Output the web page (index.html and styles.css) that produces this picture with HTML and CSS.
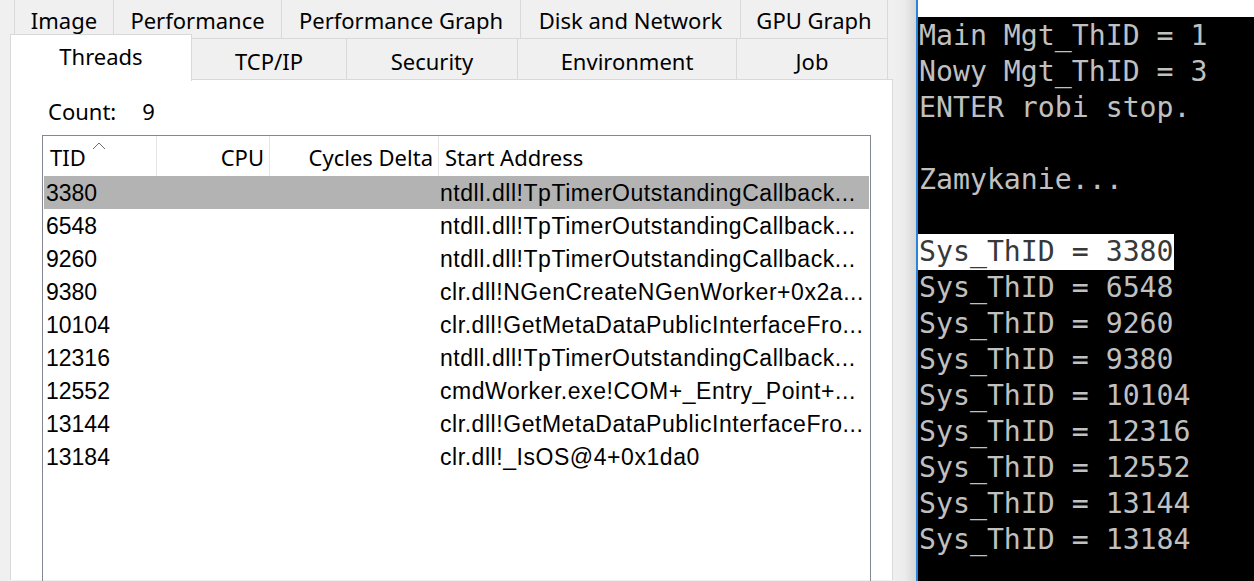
FILE: index.html
```html
<!DOCTYPE html>
<html>
<head>
<meta charset="utf-8">
<link rel="stylesheet" href="styles.css">
</head>
<body>
<div class="screen">
  <div class="dialog">
    <div class="tabrow row1">
      <div class="tab" style="width:100px">Image</div>
      <div class="tab" style="width:168px">Performance</div>
      <div class="tab" style="width:239px">Performance Graph</div>
      <div class="tab" style="width:220px">Disk and Network</div>
      <div class="tab" style="width:147px">GPU Graph</div>
    </div>
    <div class="tabrow row2">
      <div class="tab selected" style="width:182px">Threads</div>
      <div class="tab" style="width:155px">TCP/IP</div>
      <div class="tab" style="width:171px">Security</div>
      <div class="tab" style="width:219px">Environment</div>
      <div class="tab" style="width:151px">Job</div>
      <div class="tab filler"></div>
    </div>
    <div class="panel">
      <div class="count"><span class="count-label">Count:</span><span class="count-val">9</span></div>
      <div class="list">
        <div class="lhead">
          <div class="hc c-tid">TID<span class="sort">
            <svg width="14" height="8" viewBox="0 0 14 8"><polyline points="1,7 7,1 13,7" fill="none" stroke="#6d6d6d" stroke-width="1"/></svg></span></div>
          <div class="hc c-cpu">CPU</div>
          <div class="hc c-cyc">Cycles Delta</div>
          <div class="hc c-addr">Start Address</div>
        </div>
        <div class="lrow sel"><span class="r-tid">3380</span><span class="r-addr">ntdll.dll!TpTimerOutstandingCallback...</span></div>
        <div class="lrow"><span class="r-tid">6548</span><span class="r-addr">ntdll.dll!TpTimerOutstandingCallback...</span></div>
        <div class="lrow"><span class="r-tid">9260</span><span class="r-addr">ntdll.dll!TpTimerOutstandingCallback...</span></div>
        <div class="lrow"><span class="r-tid">9380</span><span class="r-addr">clr.dll!NGenCreateNGenWorker+0x2a...</span></div>
        <div class="lrow"><span class="r-tid">10104</span><span class="r-addr">clr.dll!GetMetaDataPublicInterfaceFro...</span></div>
        <div class="lrow"><span class="r-tid">12316</span><span class="r-addr">ntdll.dll!TpTimerOutstandingCallback...</span></div>
        <div class="lrow"><span class="r-tid">12552</span><span class="r-addr">cmdWorker.exe!COM+_Entry_Point+...</span></div>
        <div class="lrow"><span class="r-tid">13144</span><span class="r-addr">clr.dll!GetMetaDataPublicInterfaceFro...</span></div>
        <div class="lrow"><span class="r-tid">13184</span><span class="r-addr">clr.dll!_IsOS@4+0x1da0</span></div>
      </div>
    </div>
  </div>
  <div class="shadow"></div>
  <div class="console">
    <div class="titlebar"></div>
    <div class="term">
      <div class="line">Main Mgt_ThID = 1</div>
      <div class="line">Nowy Mgt_ThID = 3</div>
      <div class="line">ENTER robi stop.</div>
      <div class="line"></div>
      <div class="line">Zamykanie...</div>
      <div class="line"></div>
      <div class="line"><span class="hl">Sys_ThID = 3380</span></div>
      <div class="line">Sys_ThID = 6548</div>
      <div class="line">Sys_ThID = 9260</div>
      <div class="line">Sys_ThID = 9380</div>
      <div class="line">Sys_ThID = 10104</div>
      <div class="line">Sys_ThID = 12316</div>
      <div class="line">Sys_ThID = 12552</div>
      <div class="line">Sys_ThID = 13144</div>
      <div class="line">Sys_ThID = 13184</div>
    </div>
  </div>
</div>
</body>
</html>
```

FILE: styles.css
```css
* { box-sizing: border-box; }
html, body { margin: 0; padding: 0; }
body { width: 1254px; height: 581px; overflow: hidden; background: #f0f0f0; }
.screen { display: flex; width: 1254px; height: 581px; overflow: hidden; }

.dialog {
  width: 893px; flex: none;
  background: #f0f0f0;
  font-family: "Noto Sans", sans-serif;
  font-size: 22px;
  color: #000;
}
.tabrow { display: flex; }
.row1 { height: 39px; padding-left: 14px; }
.row2 { height: 41px; padding-left: 10px; }
.tab {
  flex: none;
  display: flex; align-items: center; justify-content: center;
  border-right: 1px solid #d9d9d9;
  border-bottom: 1px solid #d9d9d9;
  background: #f0f0f0;
  white-space: nowrap;
}
.row1 .tab:first-child { border-left: 1px solid #d9d9d9; }
.row1 .tab { padding-top: 1px; }
.row2 .tab { padding-top: 3px; }
.tab.selected {
  background: #fff;
  margin-top: -5px;
  height: 47px;
  border: 1px solid #d9d9d9;
  border-bottom: none;
  padding-top: 0; padding-bottom: 4px;
}
.tab.filler { width: 1px; border-right: none; flex: 1; }

.panel {
  margin-left: 10px;
  height: 500px;
  background: #fff;
  border-left: 1px solid #d9d9d9;
  border-right: 1px solid #d9d9d9;
  padding: 9px 0 0 31px;
}
.count { height: 46px; display: flex; align-items: center; padding-left: 6px; padding-bottom: 3px; }
.count-val { margin-left: 26px; }

.list {
  width: 829px; height: 460px;
  border: 1px solid #828790;
  padding: 0 1px;
}
.lhead { display: flex; height: 40px; }
.hc { position: relative; display: flex; align-items: center; padding-top: 1px; border-right: 1px solid #e5e5e5; white-space: nowrap; }
.c-tid { width: 113px; padding-left: 6px; }
.c-cpu { width: 113px; justify-content: flex-end; padding-right: 5px; }
.c-cyc { width: 169px; justify-content: flex-end; padding-right: 5px; }
.c-addr { flex: 1; padding-left: 6px; border-right: none; }
.sort { position: absolute; left: 48px; top: 5px; line-height: 0; }

.lrow {
  display: flex; height: 33px; align-items: center;
  padding-top: 2px;
  font-family: "Liberation Sans", Arial, sans-serif;
  font-size: 23px;
  white-space: nowrap;
}
.lrow.sel { background: #b3b3b3; }
.r-tid { width: 396px; padding-left: 2px; }
.r-addr { flex: 1; letter-spacing: 0.55px; }

.shadow {
  width: 23px; flex: none;
  background: linear-gradient(to right, #f0f0f0 0%, #ececec 50%, #d6d6d6 100%);
}
.console {
  flex: 1;
  border-left: 2px solid #2a82da;
  background: #000;
  display: flex; flex-direction: column;
}
.titlebar { height: 17px; background: #fff; flex: none; }
.term {
  padding-left: 1px;
  padding-top: 1px;
  font-family: "DejaVu Sans Mono", monospace;
  font-size: 28.2px;
  line-height: 36px;
  color: #c0c0c0;
}
.line { height: 36px; white-space: pre; }
.hl { background: #fff; color: #383838; display: inline-block; height: 36px; padding-right: 0; margin-left: -1px; padding-left: 1px; }
```
